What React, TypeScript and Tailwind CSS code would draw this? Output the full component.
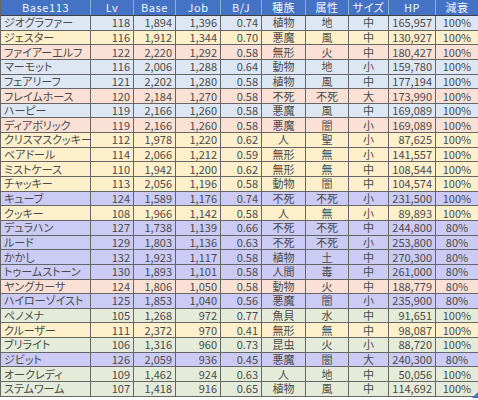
const COLORS: Record<string, string> = {
  blue: "bg-[#dde7f4]",
  yellow: "bg-[#fdf0cb]",
  salmon: "bg-[#fbe1d5]",
  lavender: "bg-[#cbcbf6]",
  green: "bg-[#e4ecd9]",
};

type Row = [string, string, string, string, string, string, string, string, string, string, string];

const rows: Row[] = [
  ["ジオグラファー", "118", "1,894", "1,396", "0.74", "植物", "地", "中", "165,957", "100%", "blue"],
  ["ジェスター", "116", "1,912", "1,344", "0.70", "悪魔", "風", "中", "130,927", "100%", "yellow"],
  ["ファイアーエルフ", "122", "2,220", "1,292", "0.58", "無形", "火", "中", "180,427", "100%", "salmon"],
  ["マーモット", "116", "2,006", "1,288", "0.64", "動物", "地", "小", "159,780", "100%", "blue"],
  ["フェアリーフ", "121", "2,202", "1,280", "0.58", "植物", "風", "中", "177,194", "100%", "blue"],
  ["フレイムホース", "120", "2,184", "1,270", "0.58", "不死", "不死", "大", "173,990", "100%", "salmon"],
  ["ハーピー", "119", "2,166", "1,260", "0.58", "悪魔", "風", "中", "169,089", "100%", "blue"],
  ["ディアボリック", "119", "2,166", "1,260", "0.58", "悪魔", "闇", "小", "169,089", "100%", "salmon"],
  ["クリスマスクッキー", "112", "1,978", "1,220", "0.62", "人", "聖", "小", "87,625", "100%", "yellow"],
  ["ベアドール", "114", "2,066", "1,212", "0.59", "無形", "無", "小", "141,557", "100%", "yellow"],
  ["ミストケース", "110", "1,942", "1,200", "0.62", "無形", "無", "中", "108,544", "100%", "yellow"],
  ["チャッキー", "113", "2,056", "1,196", "0.58", "動物", "闇", "中", "104,574", "100%", "yellow"],
  ["キューブ", "124", "1,589", "1,176", "0.74", "不死", "不死", "小", "231,500", "100%", "lavender"],
  ["クッキー", "108", "1,966", "1,142", "0.58", "人", "無", "小", "89,893", "100%", "yellow"],
  ["デュラハン", "127", "1,738", "1,139", "0.66", "不死", "不死", "中", "244,800", "80%", "lavender"],
  ["ルード", "129", "1,803", "1,136", "0.63", "不死", "不死", "小", "253,800", "80%", "lavender"],
  ["かかし", "132", "1,923", "1,117", "0.58", "植物", "土", "中", "270,300", "80%", "lavender"],
  ["トゥームストーン", "130", "1,893", "1,101", "0.58", "人間", "毒", "中", "261,000", "80%", "lavender"],
  ["ヤングカーサ", "124", "1,806", "1,050", "0.58", "動物", "火", "中", "188,779", "80%", "salmon"],
  ["ハイローゾイスト", "125", "1,853", "1,040", "0.56", "悪魔", "闇", "小", "235,900", "80%", "lavender"],
  ["ペノメナ", "105", "1,268", "972", "0.77", "魚貝", "水", "中", "91,651", "100%", "green"],
  ["クルーザー", "111", "2,372", "970", "0.41", "無形", "無", "中", "98,087", "100%", "yellow"],
  ["ブリライト", "106", "1,316", "960", "0.73", "昆虫", "火", "小", "88,720", "100%", "green"],
  ["ジビット", "126", "2,059", "936", "0.45", "悪魔", "闇", "大", "240,300", "80%", "lavender"],
  ["オークレディ", "109", "1,462", "924", "0.63", "人", "地", "中", "50,056", "100%", "green"],
  ["ステムワーム", "107", "1,418", "916", "0.65", "植物", "風", "中", "114,692", "100%", "green"],
];

const headers = ["Base113", "Lv", "Base", "Job", "B/J", "種族", "属性", "サイズ", "HP", "減衰"];

// alignment per column
const align = [
  "justify-start pl-[3px]",
  "justify-end pr-[3px]",
  "justify-end pr-[3px]",
  "justify-end pr-[3px]",
  "justify-end pr-[3px]",
  "justify-center",
  "justify-center",
  "justify-center",
  "justify-end pr-[3px]",
  "justify-center",
];

const grid =
  "grid grid-cols-[90px_43px_42px_45px_41px_44px_43px_40px_47px_43px]";

export default function App() {
  return (
    <div
      className="relative w-[478px] h-[400px] bg-white overflow-hidden text-[11px] leading-none text-[#4a4a4a] [font-feature-settings:'palt']"
      style={{ fontFamily: '"Noto Sans CJK JP", "Noto Sans", sans-serif' }}
    >
      <div className="border-l border-[#666]">
        <div className={`${grid} h-[16px] bg-[#4472c4] border-b border-[#404040]`}>
          {headers.map((h) => (
            <div
              key={h}
              className="flex items-center justify-center text-[#f4f6fb] tracking-[0.6px] border-r border-[#8ea9db] last:border-[#404040]"
            >
              {h}
            </div>
          ))}
        </div>
        {rows.map((r) => (
          <div
            key={r[0]}
            className={`${grid} h-[14.65px] border-b border-[#666] ${COLORS[r[10]]}`}
          >
            {r.slice(0, 10).map((c, i) => (
              <div
                key={i}
                className={`flex items-center border-r border-[#666] whitespace-nowrap ${align[i]}`}
              >
                {c}
              </div>
            ))}
          </div>
        ))}
      </div>
      <svg className="absolute right-0 bottom-[2px]" width="6" height="6" viewBox="0 0 6 6">
        <path d="M6 0 L6 6 L0 6 Z" fill="#4472c4" />
      </svg>
    </div>
  );
}
